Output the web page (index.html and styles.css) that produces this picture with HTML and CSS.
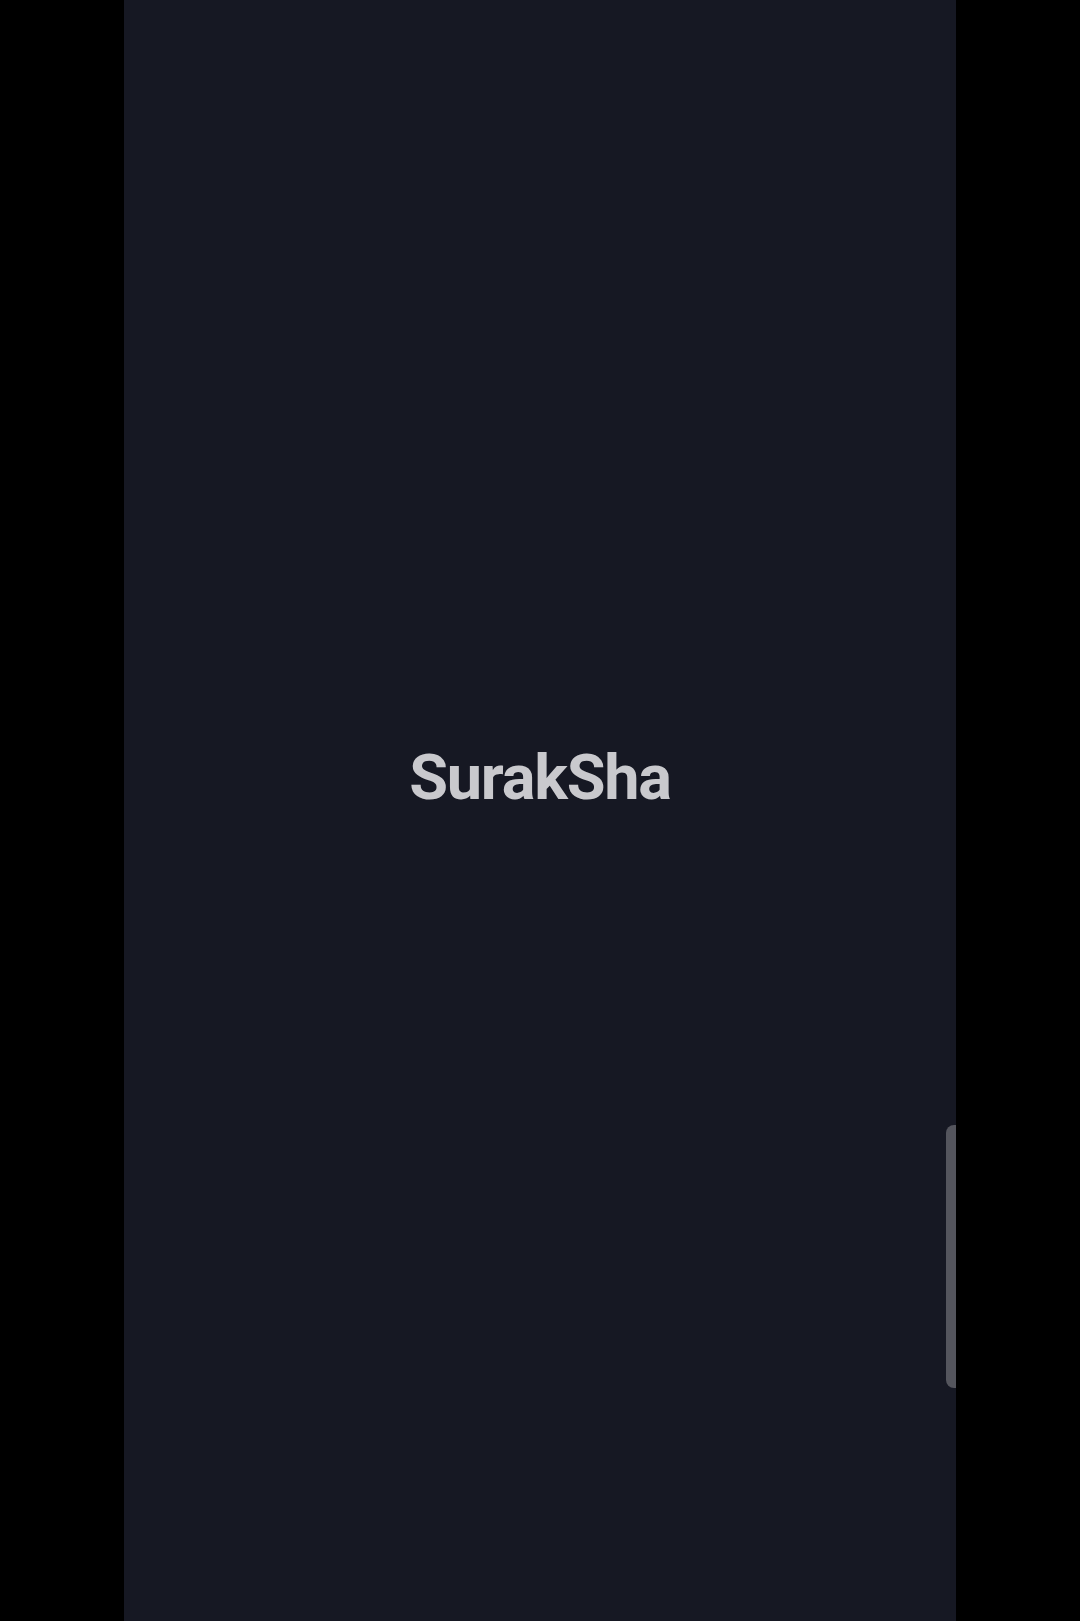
FILE: index.html
```html
<!DOCTYPE html>
<html>
<head>
<meta charset="utf-8">
<link rel="stylesheet" href="styles.css">
</head>
<body>
<div class="screen">
  <div class="splash">
    <h1 class="brand">SurakSha</h1>
  </div>
  <div class="edge-handle"></div>
</div>
</body>
</html>
```
FILE: styles.css
```css
html, body {
  margin: 0;
  padding: 0;
  background: #000;
  height: 100%;
}
.screen {
  position: relative;
  width: 832px;
  height: 1621px;
  margin: 0 auto;
  background: #161823;
  overflow: hidden;
}
.splash {
  display: flex;
  justify-content: center;
  padding-top: 738px;
}
.brand {
  margin: 0;
  font-family: Roboto, "Liberation Sans", sans-serif;
  font-weight: 700;
  font-size: 63px;
  line-height: 80px;
  color: #c9c9cd;
  letter-spacing: -1.2px;
}
.edge-handle {
  position: absolute;
  right: 0;
  top: 1125px;
  width: 10px;
  height: 263px;
  background: #54555d;
  border-radius: 8px 0 0 8px;
}
```
